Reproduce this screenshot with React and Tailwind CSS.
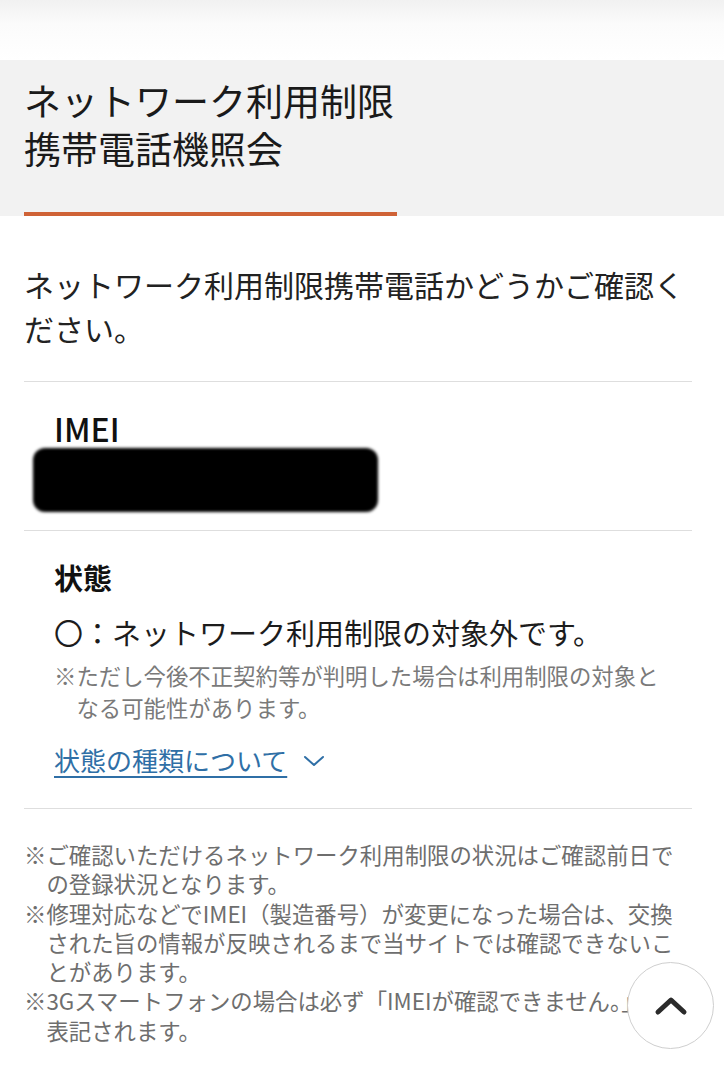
import React from "react";

const jp = { fontFamily: '"Noto Sans CJK JP", "Noto Sans", sans-serif' };

export default function App() {
  return (
    <div className="relative w-[724px] min-h-[1080px] bg-white text-[#1c1c1c]" style={jp}>
      <div className="h-[60px] bg-linear-to-b from-[#f1f1f1] via-[#fbfbfb] via-40% to-white" />
      <header className="bg-[#f2f2f2] pt-[16px]">
        <h1 className="px-[24px] text-[37px] font-normal text-[#1a1a1a]">
          <div className="leading-[48px]">ネットワーク利用制限</div>
          <div className="leading-[48px]">携帯電話機照会</div>
        </h1>
        <div className="ml-[24px] mt-[40px] h-[4px] w-[373px] bg-[#cf6236]" />
      </header>

      <main className="pl-[24px] pr-[32px]">
        <p className="mt-[46px] text-[30px] leading-[44px] text-[#222]">
          ネットワーク利用制限携帯電話かどうかご確認ください。
        </p>

        <div className="mt-[31px] border-t border-[#dedede]" />

        <section className="px-[30px] pt-[26px] pb-[18px]">
          <div className="text-[32px] leading-[40px] font-medium text-[#111]">IMEI</div>
          <div className="-ml-[21px] h-[64px] w-[345px] rounded-[12px] bg-black blur-[1.5px]" />
        </section>

        <div className="border-t border-[#dedede]" />

        <section className="px-[30px] pt-[26px] pb-[30px]">
          <h2 className="text-[29px] leading-[40px] font-bold text-[#111]">状態</h2>
          <p className="mt-[15px] text-[29px] leading-[40px] text-[#1c1c1c]">
            〇：ネットワーク利用制限の対象外です。
          </p>
          <p className="mt-[7px] pl-[1em] -indent-[1em] text-[22.4px] leading-[32px] text-[#7a7a7a]">
            ※ただし今後不正契約等が判明した場合は利用制限の対象となる可能性があります。
          </p>
          <div className="mt-[19px] flex items-center gap-[16px] text-[#2f6fa6]">
            <span className="text-[26px] leading-[36px] underline underline-offset-[5px] decoration-[2px]">
              状態の種類について
            </span>
            <svg width="22" height="14" viewBox="0 0 22 14" fill="none" className="mt-[2px]">
              <path d="M2 3l9 8 9-8" stroke="#2f6fa6" strokeWidth="2" strokeLinecap="round" strokeLinejoin="round" />
            </svg>
          </div>
        </section>

        <div className="border-t border-[#dedede]" />

        <section className="pt-[31px] pb-[40px] text-[22.4px] leading-[29.3px] text-[#6e6e6e]">
          <p className="pl-[1em] -indent-[1em]">
            ※ご確認いただけるネットワーク利用制限の状況はご確認前日での登録状況となります。
          </p>
          <p className="pl-[1em] -indent-[1em]">
            ※修理対応などでIMEI（製造番号）が変更になった場合は、交換された旨の情報が反映されるまで当サイトでは確認できないことがあります。
          </p>
          <p className="pl-[1em] -indent-[1em]">
            ※3Gスマートフォンの場合は必ず「IMEIが確認できません。」と
            <br />
            表記されます。
          </p>
        </section>
      </main>

      <button className="absolute left-[627px] top-[962px] flex h-[87px] w-[87px] items-center justify-center rounded-full border-[1.5px] border-[#cfcfcf] bg-white">
        <svg width="34" height="22" viewBox="0 0 34 22" fill="none">
          <path d="M4 17L17 5l13 12" stroke="#2b2b2b" strokeWidth="5" strokeLinecap="round" strokeLinejoin="round" />
        </svg>
      </button>
    </div>
  );
}
